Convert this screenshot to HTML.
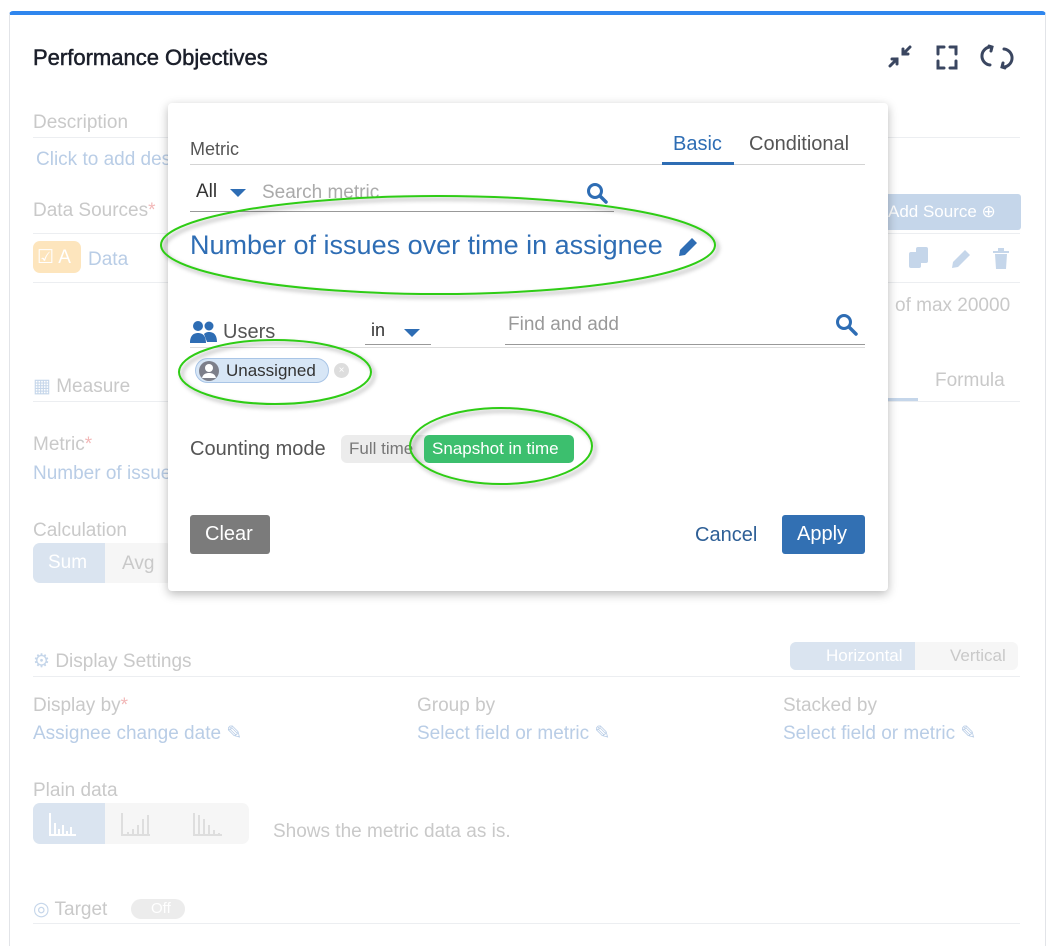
<!DOCTYPE html>
<html><head><meta charset="utf-8"><style>
*{box-sizing:border-box;margin:0;padding:0}
html,body{width:1053px;height:946px;overflow:hidden}
body{background:#fff;font-family:"Liberation Sans",Arial,sans-serif;position:relative}
.a{position:absolute;white-space:nowrap}
.card{position:absolute;left:9px;top:11px;width:1037px;height:960px;border:1px solid #e2e4e8;border-top:4px solid #2f86ee;border-radius:4px;background:#fff}
.lbl{color:#c9c9c9;font-size:19px}
.lnk{color:#b9cde6;font-size:19px}
.line{position:absolute;height:1px;background:#eceef1}
.pop{position:absolute;left:168px;top:103px;width:720px;height:488px;background:#fff;border-radius:4px;box-shadow:0 3px 10px rgba(0,0,0,.28)}
</style></head><body>
<div class="card"></div>
<div class="a" style="left:33px;top:45px;font-size:22px;color:#1b1f2a;-webkit-text-stroke:0.5px #1b1f2a">Performance Objectives</div>
<svg class="a" style="left:886px;top:42px" width="130" height="30" viewBox="0 0 130 30">
<g stroke="#3a4660" stroke-width="3" fill="none" stroke-linecap="round">
<path d="M4 24L11 17M6 17h5v5M24 5L17 12M17 7v5h5"/>
<path d="M52 12V5h6M64 5h6v7M70 19v7h-6M58 26h-6v-7"/>
<path d="M106 5a9 9 0 0 0 -2 18M103 4l3 1-1 4M116 25a9 9 0 0 0 2 -18M119 26l-3-1 1-4"/>
</g></svg>
<div class="a lbl" style="left:33px;top:112px">Description</div>
<div class="line" style="left:33px;top:137px;width:987px"></div>
<div class="a lnk" style="left:36px;top:149px">Click to add description</div>
<div class="a lbl" style="left:33px;top:200px">Data Sources<span style="color:#f2b8b8">*</span></div>
<div class="a" style="left:860px;top:194px;width:161px;height:36px;background:#c5d6ea;border-radius:3px;color:#fff;font-size:17px;padding:8px 0 0 28px">Add Source ⊕</div>
<div class="line" style="left:33px;top:233px;width:987px"></div>
<div class="a" style="left:33px;top:241px;width:48px;height:32px;background:#fde5bd;border-radius:7px;color:#fff;font-size:19px;padding:5px 0 0 4px">☑ A</div>
<div class="a lnk" style="left:88px;top:249px">Data</div>
<svg class="a" style="left:906px;top:245px" width="110" height="26"><g fill="#c5d6ea"><rect x="3" y="7" width="12" height="16" rx="2"/><rect x="10" y="2" width="12" height="16" rx="2"/><path d="M46 23l1-6 12-12 5 5-12 12z"/><path d="M87 6h16v2H87zM92 3h6v3h-6zM89 9h12l-1 15H90z"/></g></svg>
<div class="line" style="left:33px;top:282px;width:987px"></div>
<div class="a lbl" style="left:895px;top:295px">of max 20000</div>
<div class="a lbl" style="left:33px;top:375px"><span style="color:#c5d6ea">▦</span> Measure</div>
<div class="a" style="left:860px;top:370px;color:#b9cde6;font-size:19px">sic</div>
<div class="a" style="left:860px;top:398px;width:58px;height:3px;background:#c5d6ea"></div>
<div class="a lbl" style="left:935px;top:370px">Formula</div>
<div class="line" style="left:33px;top:401px;width:987px"></div>
<div class="a lbl" style="left:33px;top:434px">Metric<span style="color:#f2b8b8">*</span></div>
<div class="a lnk" style="left:33px;top:463px">Number of issues</div>
<div class="a lbl" style="left:33px;top:520px">Calculation</div>
<div class="a" style="left:33px;top:543px;width:140px;height:40px;background:#f6f6f6;border-radius:7px"></div>
<div class="a" style="left:33px;top:543px;width:72px;height:40px;background:#dae4f0;border-radius:7px 0 0 7px;color:#fff;font-size:19px;padding:9px 0 0 15px">Sum</div>
<div class="a lbl" style="left:122px;top:553px">Avg</div>
<div class="a lbl" style="left:33px;top:650px"><span style="color:#c5d6ea">⚙</span> Display Settings</div>
<div class="a" style="left:790px;top:642px;width:228px;height:28px;background:#f6f6f6;border-radius:6px"></div>
<div class="a" style="left:790px;top:642px;width:125px;height:28px;background:#dae4f0;border-radius:6px 0 0 6px;color:#fff;font-size:17px;padding:4px 0 0 36px">Horizontal</div>
<div class="a lbl" style="left:950px;top:646px;font-size:17px">Vertical</div>
<div class="line" style="left:33px;top:676px;width:987px"></div>
<div class="a lbl" style="left:33px;top:695px">Display by<span style="color:#f2b8b8">*</span></div>
<div class="a lnk" style="left:33px;top:722px">Assignee change date ✎</div>
<div class="a lbl" style="left:417px;top:695px">Group by</div>
<div class="a lnk" style="left:417px;top:722px">Select field or metric ✎</div>
<div class="a lbl" style="left:783px;top:695px">Stacked by</div>
<div class="a lnk" style="left:783px;top:722px">Select field or metric ✎</div>
<div class="a lbl" style="left:33px;top:780px">Plain data</div>
<div class="a" style="left:33px;top:803px;width:216px;height:41px;background:#f6f6f6;border-radius:7px"></div>
<div class="a" style="left:33px;top:803px;width:72px;height:41px;background:#dae4f0;border-radius:7px 0 0 7px"></div>
<svg class="a" style="left:48px;top:811px" width="190" height="26"><g fill="none" stroke="#fff" stroke-width="2"><path d="M2 2v22h26M7 24v-12M11 24v-6M15 24v-10M19 24v-4M23 24v-8"/></g><g fill="none" stroke="#dedede" stroke-width="2"><path d="M74 2v22h28M80 24v-3M85 24v-6M90 24v-10M95 24v-16M100 24v-20M146 2v22h28M151 24v-20M156 24v-16M161 24v-10M166 24v-5M171 24v-2"/></g></svg>
<div class="a lbl" style="left:273px;top:821px">Shows the metric data as is.</div>
<div class="a lbl" style="left:33px;top:898px"><span style="color:#c5d6ea">◎</span> Target</div>
<div class="a" style="left:131px;top:899px;width:54px;height:20px;background:#ececec;border-radius:10px;color:#fff;font-size:15px;padding:1px 0 0 20px">Off</div>
<div class="line" style="left:33px;top:923px;width:987px"></div>
<div class="pop"></div>
<div class="a" style="left:190px;top:139px;font-size:18px;color:#555">Metric</div>
<div class="a" style="left:190px;top:164px;width:675px;height:1px;background:#d4d4d4"></div>
<div class="a" style="left:673px;top:133px;font-size:20px;color:#2e6db4">Basic</div>
<div class="a" style="left:662px;top:162px;width:72px;height:3px;background:#2e6db4"></div>
<div class="a" style="left:749px;top:133px;font-size:20px;color:#555">Conditional</div>
<div class="a" style="left:196px;top:181px;font-size:19px;color:#333">All</div>
<svg class="a" style="left:230px;top:189px" width="16" height="9"><path d="M0 0h16L8 8z" fill="#2e6db4"/></svg>
<div class="a" style="left:262px;top:182px;font-size:19px;color:#aaa">Search metric</div>
<svg class="a" style="left:586px;top:182px" width="22" height="22"><circle cx="9" cy="9" r="6.5" stroke="#2e6db4" stroke-width="3" fill="none"/><path d="M14 14l6 6" stroke="#2e6db4" stroke-width="3.5" stroke-linecap="round"/></svg>
<div class="a" style="left:190px;top:211px;width:424px;height:1px;background:#999"></div>
<div class="a" style="left:190px;top:230px;font-size:27px;color:#2e6db4">Number of issues over time in assignee</div>
<svg class="a" style="left:676px;top:235px" width="24" height="24"><path d="M3 21l1-6L16 3l5 5L9 20z" fill="#2e6db4"/></svg>
<svg class="a" style="left:190px;top:320px" width="27" height="23"><circle cx="8" cy="6" r="5" fill="#2e6db4"/><circle cx="19" cy="6" r="4.5" fill="#2e6db4"/><path d="M0 23c0-8 4-10 8-10s8 2 8 10z M14 14c2-2 4-2 5-2 4 0 8 2 8 10h-10z" fill="#2e6db4"/></svg>
<div class="a" style="left:223px;top:321px;font-size:20px;color:#555">Users</div>
<div class="a" style="left:371px;top:320px;font-size:18px;color:#333">in</div>
<svg class="a" style="left:404px;top:329px" width="16" height="9"><path d="M0 0h16L8 8z" fill="#2e6db4"/></svg>
<div class="a" style="left:365px;top:344px;width:66px;height:1px;background:#999"></div>
<div class="a" style="left:508px;top:314px;font-size:19px;color:#999">Find and add</div>
<svg class="a" style="left:835px;top:313px" width="24" height="24"><circle cx="9" cy="9" r="6.5" stroke="#2e6db4" stroke-width="3" fill="none"/><path d="M14 14l7 7" stroke="#2e6db4" stroke-width="3.5" stroke-linecap="round"/></svg>
<div class="a" style="left:505px;top:344px;width:360px;height:1px;background:#999"></div>
<div class="a" style="left:190px;top:347px;width:675px;height:1px;background:#ddd"></div>
<div class="a" style="left:195px;top:358px;width:134px;height:25px;background:#d7e6f6;border:1px solid #a9c5e6;border-radius:13px"></div>
<svg class="a" style="left:198px;top:360px" width="22" height="22"><circle cx="11" cy="11" r="10" fill="#7d7f8a"/><circle cx="11" cy="8" r="4" fill="#fff"/><path d="M4 18c1-4 4-5 7-5s6 1 7 5" fill="#fff"/></svg>
<div class="a" style="left:226px;top:361px;font-size:17px;color:#333">Unassigned</div>
<div class="a" style="left:334px;top:363px;width:15px;height:15px;border-radius:50%;background:#ddd;color:#fff;font-size:10px;text-align:center;line-height:15px">×</div>
<div class="a" style="left:190px;top:438px;font-size:20px;color:#555">Counting mode</div>
<div class="a" style="left:341px;top:435px;width:90px;height:28px;background:#ececec;border-radius:6px;color:#777;font-size:17px;padding:4px 0 0 8px">Full time</div>
<div class="a" style="left:424px;top:435px;width:150px;height:28px;background:#3cbf6e;border-radius:5px;color:#fff;font-size:17px;padding:4px 0 0 8px">Snapshot in time</div>
<div class="a" style="left:190px;top:515px;width:80px;height:39px;background:#7b7b7b;border-radius:3px;color:#fff;font-size:20px;padding:8px 0 0 15px">Clear</div>
<div class="a" style="left:695px;top:524px;font-size:20px;color:#2e5f96">Cancel</div>
<div class="a" style="left:782px;top:515px;width:83px;height:39px;background:#3270b3;border-radius:3px;color:#fff;font-size:20px;padding:8px 0 0 15px">Apply</div>
<svg class="a" style="left:0;top:0" width="1053" height="946">
<defs><filter id="s"><feDropShadow dx="3" dy="3" stdDeviation="2" flood-opacity=".35"/></filter></defs>
<g fill="none" stroke="#2ecc12" stroke-width="2" filter="url(#s)">
<ellipse cx="438" cy="245" rx="277" ry="49"/>
<ellipse cx="275" cy="372" rx="96" ry="32"/>
<ellipse cx="501" cy="446" rx="91" ry="38"/>
</g></svg>
</body></html>
